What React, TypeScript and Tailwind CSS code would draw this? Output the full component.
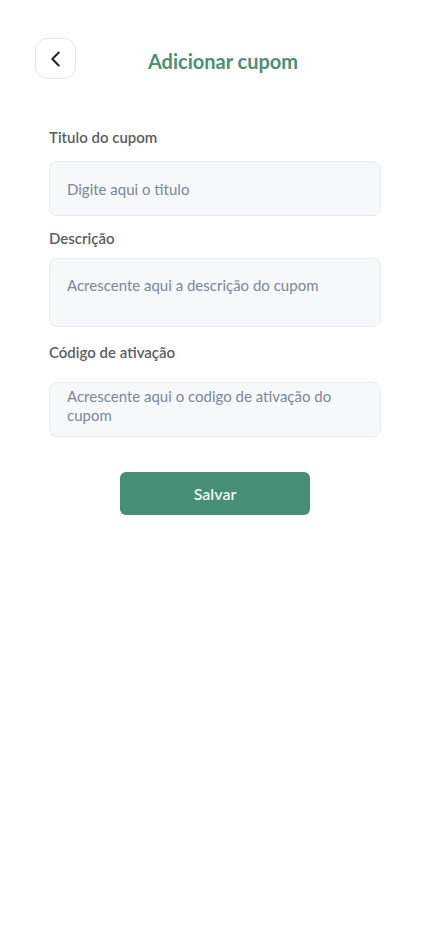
import type { ReactElement } from "react";

function BackButton(): ReactElement {
  return (
    <button
      type="button"
      className="flex h-[41px] w-[41px] items-center justify-center rounded-xl border border-[#e6e8ee] bg-white"
    >
      <svg className="h-[22px] w-[22px] text-[#1f2430]" fill="none" viewBox="0 0 24 24" stroke="currentColor" strokeWidth={2.2}>
        <path strokeLinecap="round" strokeLinejoin="round" d="M15 5l-7 7 7 7" />
      </svg>
    </button>
  );
}

export default function App(): ReactElement {
  return (
    <div className="min-h-[932px] bg-white font-['Lato','Noto_Sans',sans-serif]">
      <div className="relative mt-[38px] flex h-[41px] items-center px-[35px]">
        <BackButton />
        <h1 className="absolute left-0 right-0 top-[11px] mx-auto w-fit pl-[16px] text-[20px] font-bold leading-[24px] text-[#4a8f76]">
          Adicionar cupom
        </h1>
      </div>

      <form className="mt-[48px] flex flex-col px-[49px]">
        <label className="text-[15px] font-semibold leading-[20px] text-[#5a5e66]">Titulo do cupom</label>
        <div className="mt-[14px] flex h-[55px] items-center rounded-lg border border-[#e8ebf0] bg-[#f7f8fa] px-[17px]">
          <span className="text-[15px] leading-[20px] text-[#7d8696]">Digite aqui o titulo</span>
        </div>

        <label className="mt-[12px] text-[15px] font-semibold leading-[20px] text-[#5a5e66]">Descrição</label>
        <div className="mt-[10px] h-[69px] rounded-lg border border-[#e8ebf0] bg-[#f7f8fa] px-[17px] pt-[14px]">
          <span className="text-[15px] leading-[20px] text-[#7d8696]">Acrescente aqui a descrição do cupom</span>
        </div>

        <label className="mt-[15px] text-[15px] font-semibold leading-[20px] text-[#5a5e66]">Código de ativação</label>
        <div className="mt-[20px] h-[55px] rounded-lg border border-[#e8ebf0] bg-[#f7f8fa] pl-[17px] pr-[30px] pt-[4px]">
          <p className="text-[15px] leading-[19px] text-[#7d8696]">Acrescente aqui o codigo de ativação do cupom</p>
        </div>

        <button
          type="button"
          className="mx-auto mt-[35px] h-[43px] w-[190px] rounded-md bg-[#468f76] text-[16px] font-semibold text-[#eef5f1]"
        >
          Salvar
        </button>
      </form>
    </div>
  );
}
